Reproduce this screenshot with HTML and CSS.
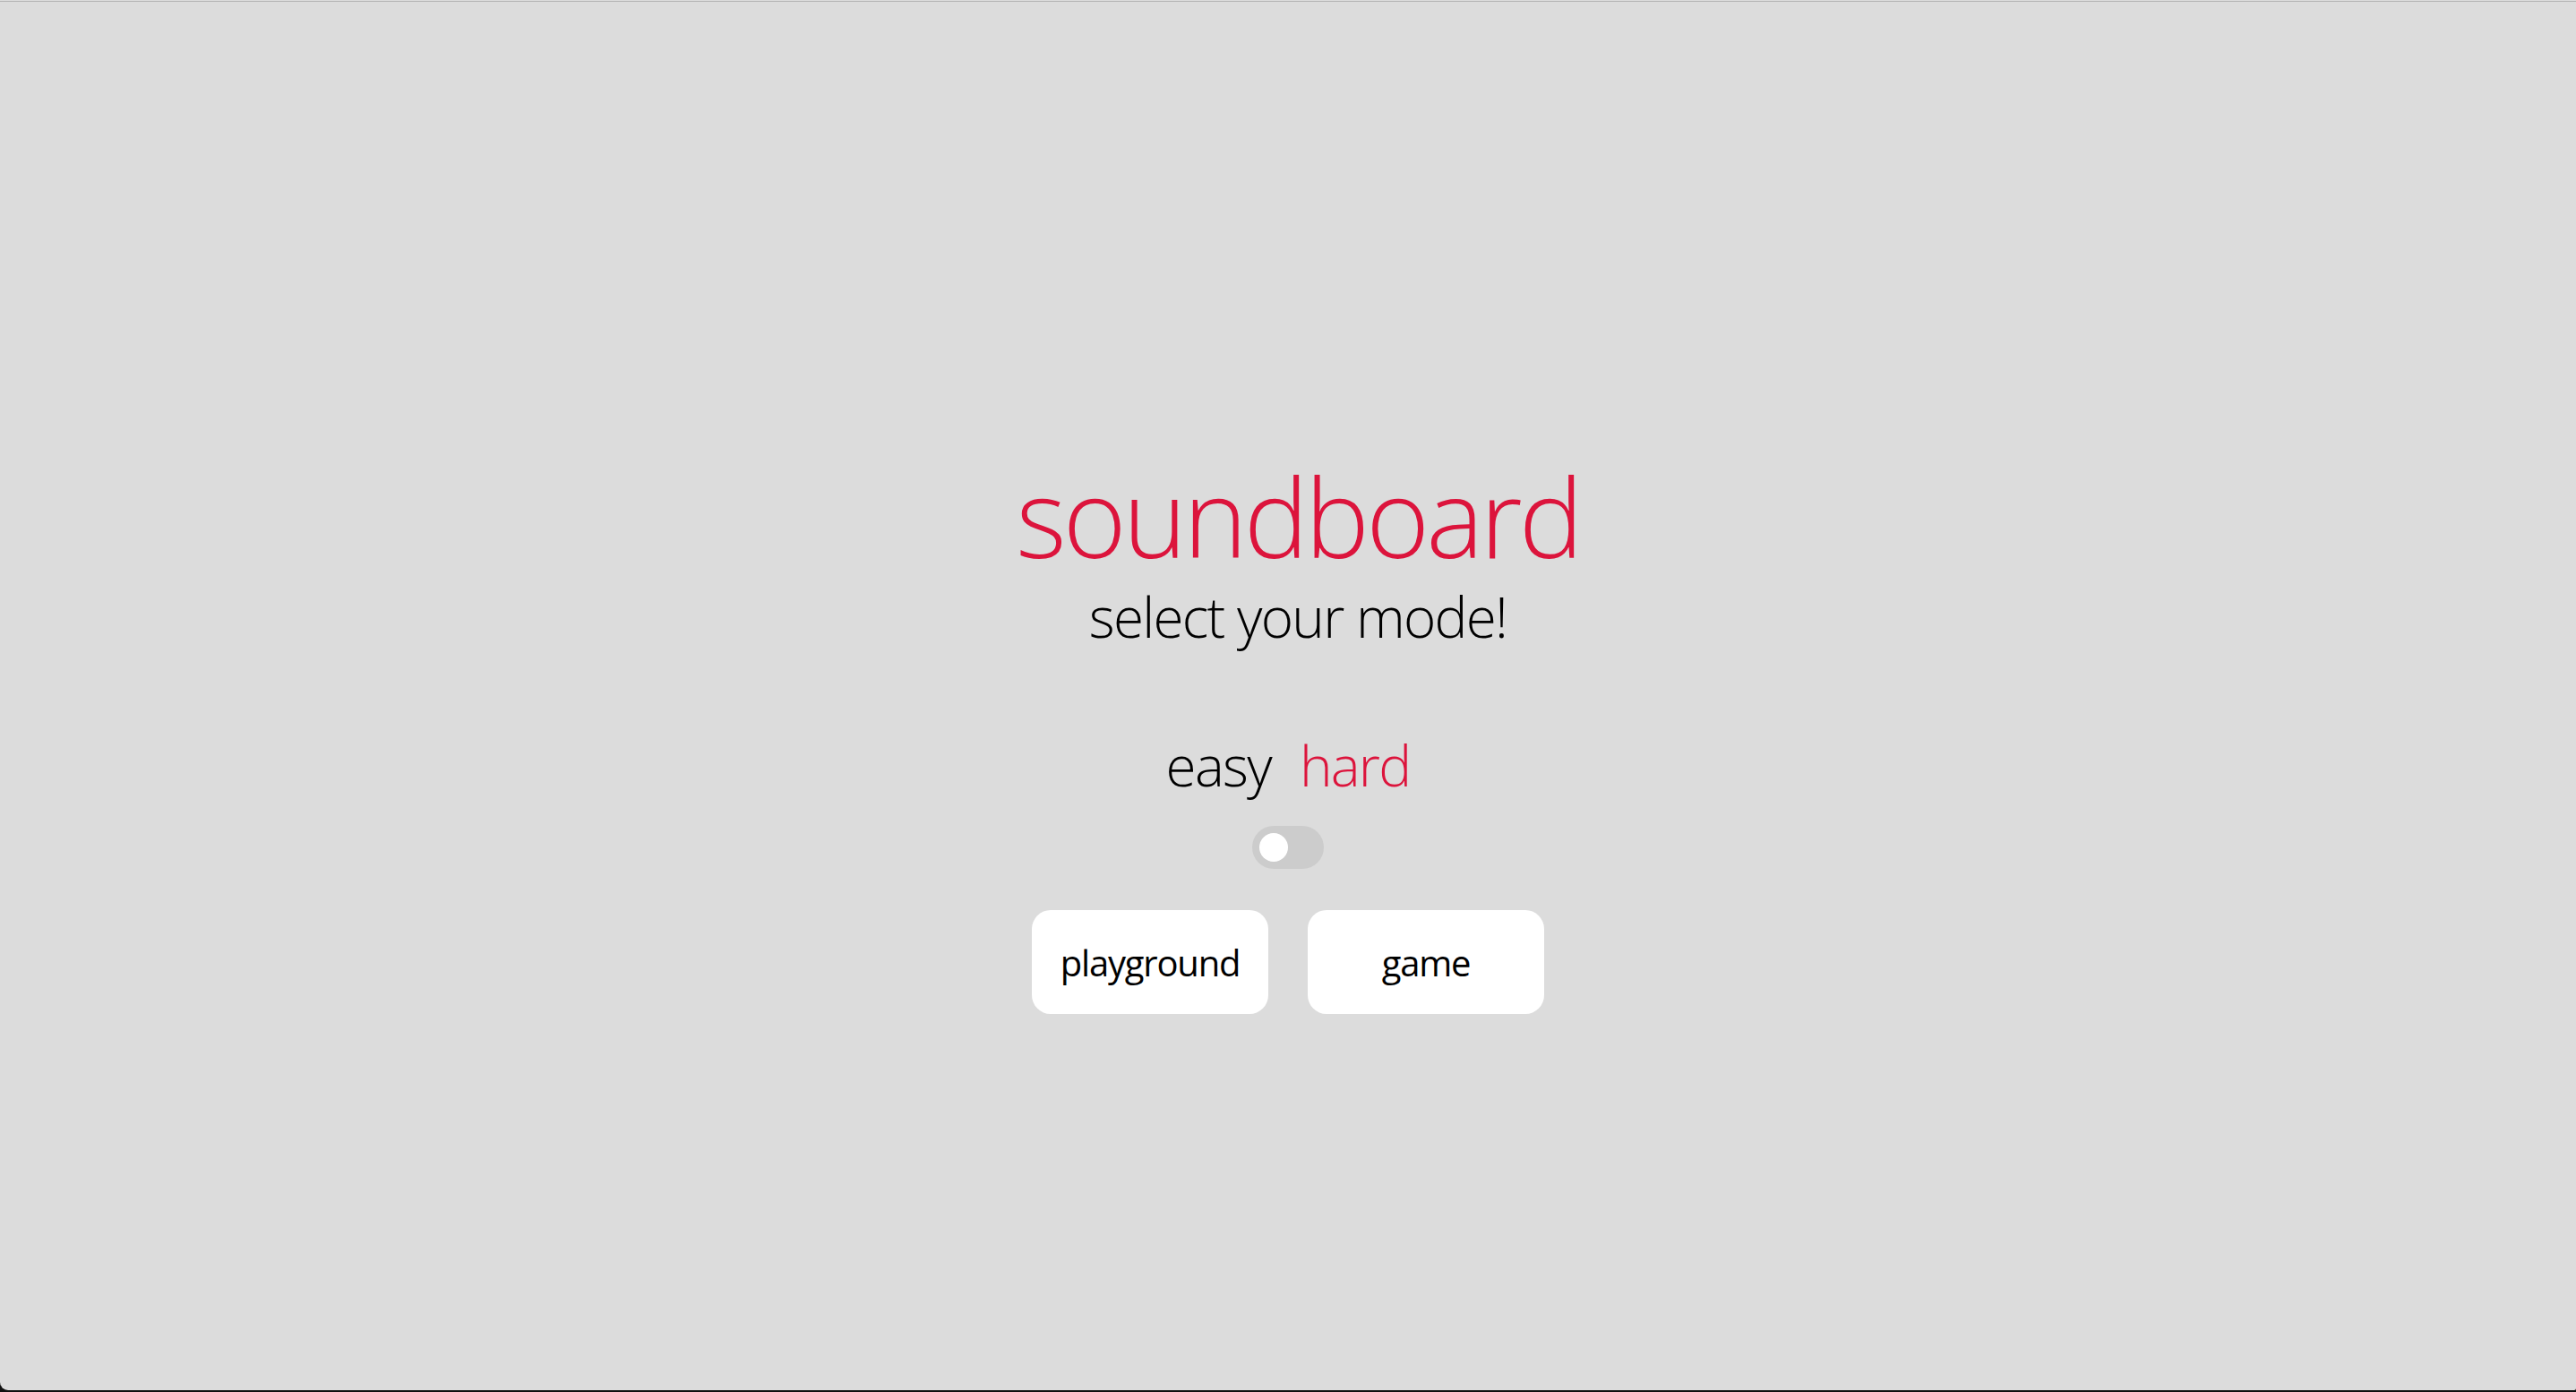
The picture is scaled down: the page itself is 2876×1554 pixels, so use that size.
FILE: index.html
```html
<!DOCTYPE html>
<html>
<head>
<meta charset="utf-8">
<title>soundboard</title>
<link rel="stylesheet" href="styles.css">
</head>
<body>
<div class="frame">
  <main class="menu">
    <div class="heading">
      <h1 class="title">soundboard</h1>
      <p class="subtitle">select your mode!</p>
    </div>
    <div class="levels">
      <span class="level">easy</span>
      <span class="level level-active">hard</span>
    </div>
    <div class="toggle"><span class="knob"></span></div>
    <div class="modes">
      <button class="mode">playground</button>
      <button class="mode">game</button>
    </div>
  </main>
</div>
</body>
</html>
```
FILE: styles.css
```css
html, body {
  margin: 0;
  padding: 0;
  background: #111;
}
.frame {
  height: 1552px;
  background: #dcdcdc;
  box-shadow: inset 0 1px 0 #dcdcdc, inset 0 2px 0 #b4b4b4;
  border-bottom-left-radius: 9px;
  border-bottom-right-radius: 2px;
  overflow: hidden;
}
.menu {
  display: flex;
  flex-direction: column;
  align-items: center;
  padding-top: 516px;
  font-family: "Open Sans", "Noto Sans", sans-serif;
  font-weight: 330;
  color: #000;
}
.heading {
  display: flex;
  flex-direction: column;
  align-items: center;
  padding-left: 22px;
}
.title {
  margin: 0;
  font-size: 121px;
  line-height: 121px;
  font-weight: 350;
  letter-spacing: -0.032em;
  color: #dc143c;
}
.subtitle {
  margin: 20px 0 0;
  font-size: 62px;
  line-height: 62px;
  letter-spacing: -0.028em;
}
.levels {
  display: flex;
  gap: 32px;
  margin-top: 104px;
  font-size: 62px;
  line-height: 62px;
  letter-spacing: -0.028em;
}
.level-active {
  color: #dc143c;
}
.toggle {
  width: 80px;
  height: 48px;
  margin-top: 37px;
  border-radius: 24px;
  background: #cccccc;
  display: flex;
  align-items: center;
  padding-left: 8px;
  box-sizing: border-box;
}
.knob {
  width: 32px;
  height: 32px;
  border-radius: 50%;
  background: #fff;
}
.modes {
  display: flex;
  gap: 44px;
  margin-top: 46px;
}
.mode {
  width: 264px;
  height: 116px;
  border: none;
  border-radius: 21px;
  background: #fff;
  color: #000;
  font-family: "Open Sans", "Noto Sans", sans-serif;
  font-weight: 370;
  font-size: 40px;
  letter-spacing: -0.03em;
  padding: 0;
}
```
